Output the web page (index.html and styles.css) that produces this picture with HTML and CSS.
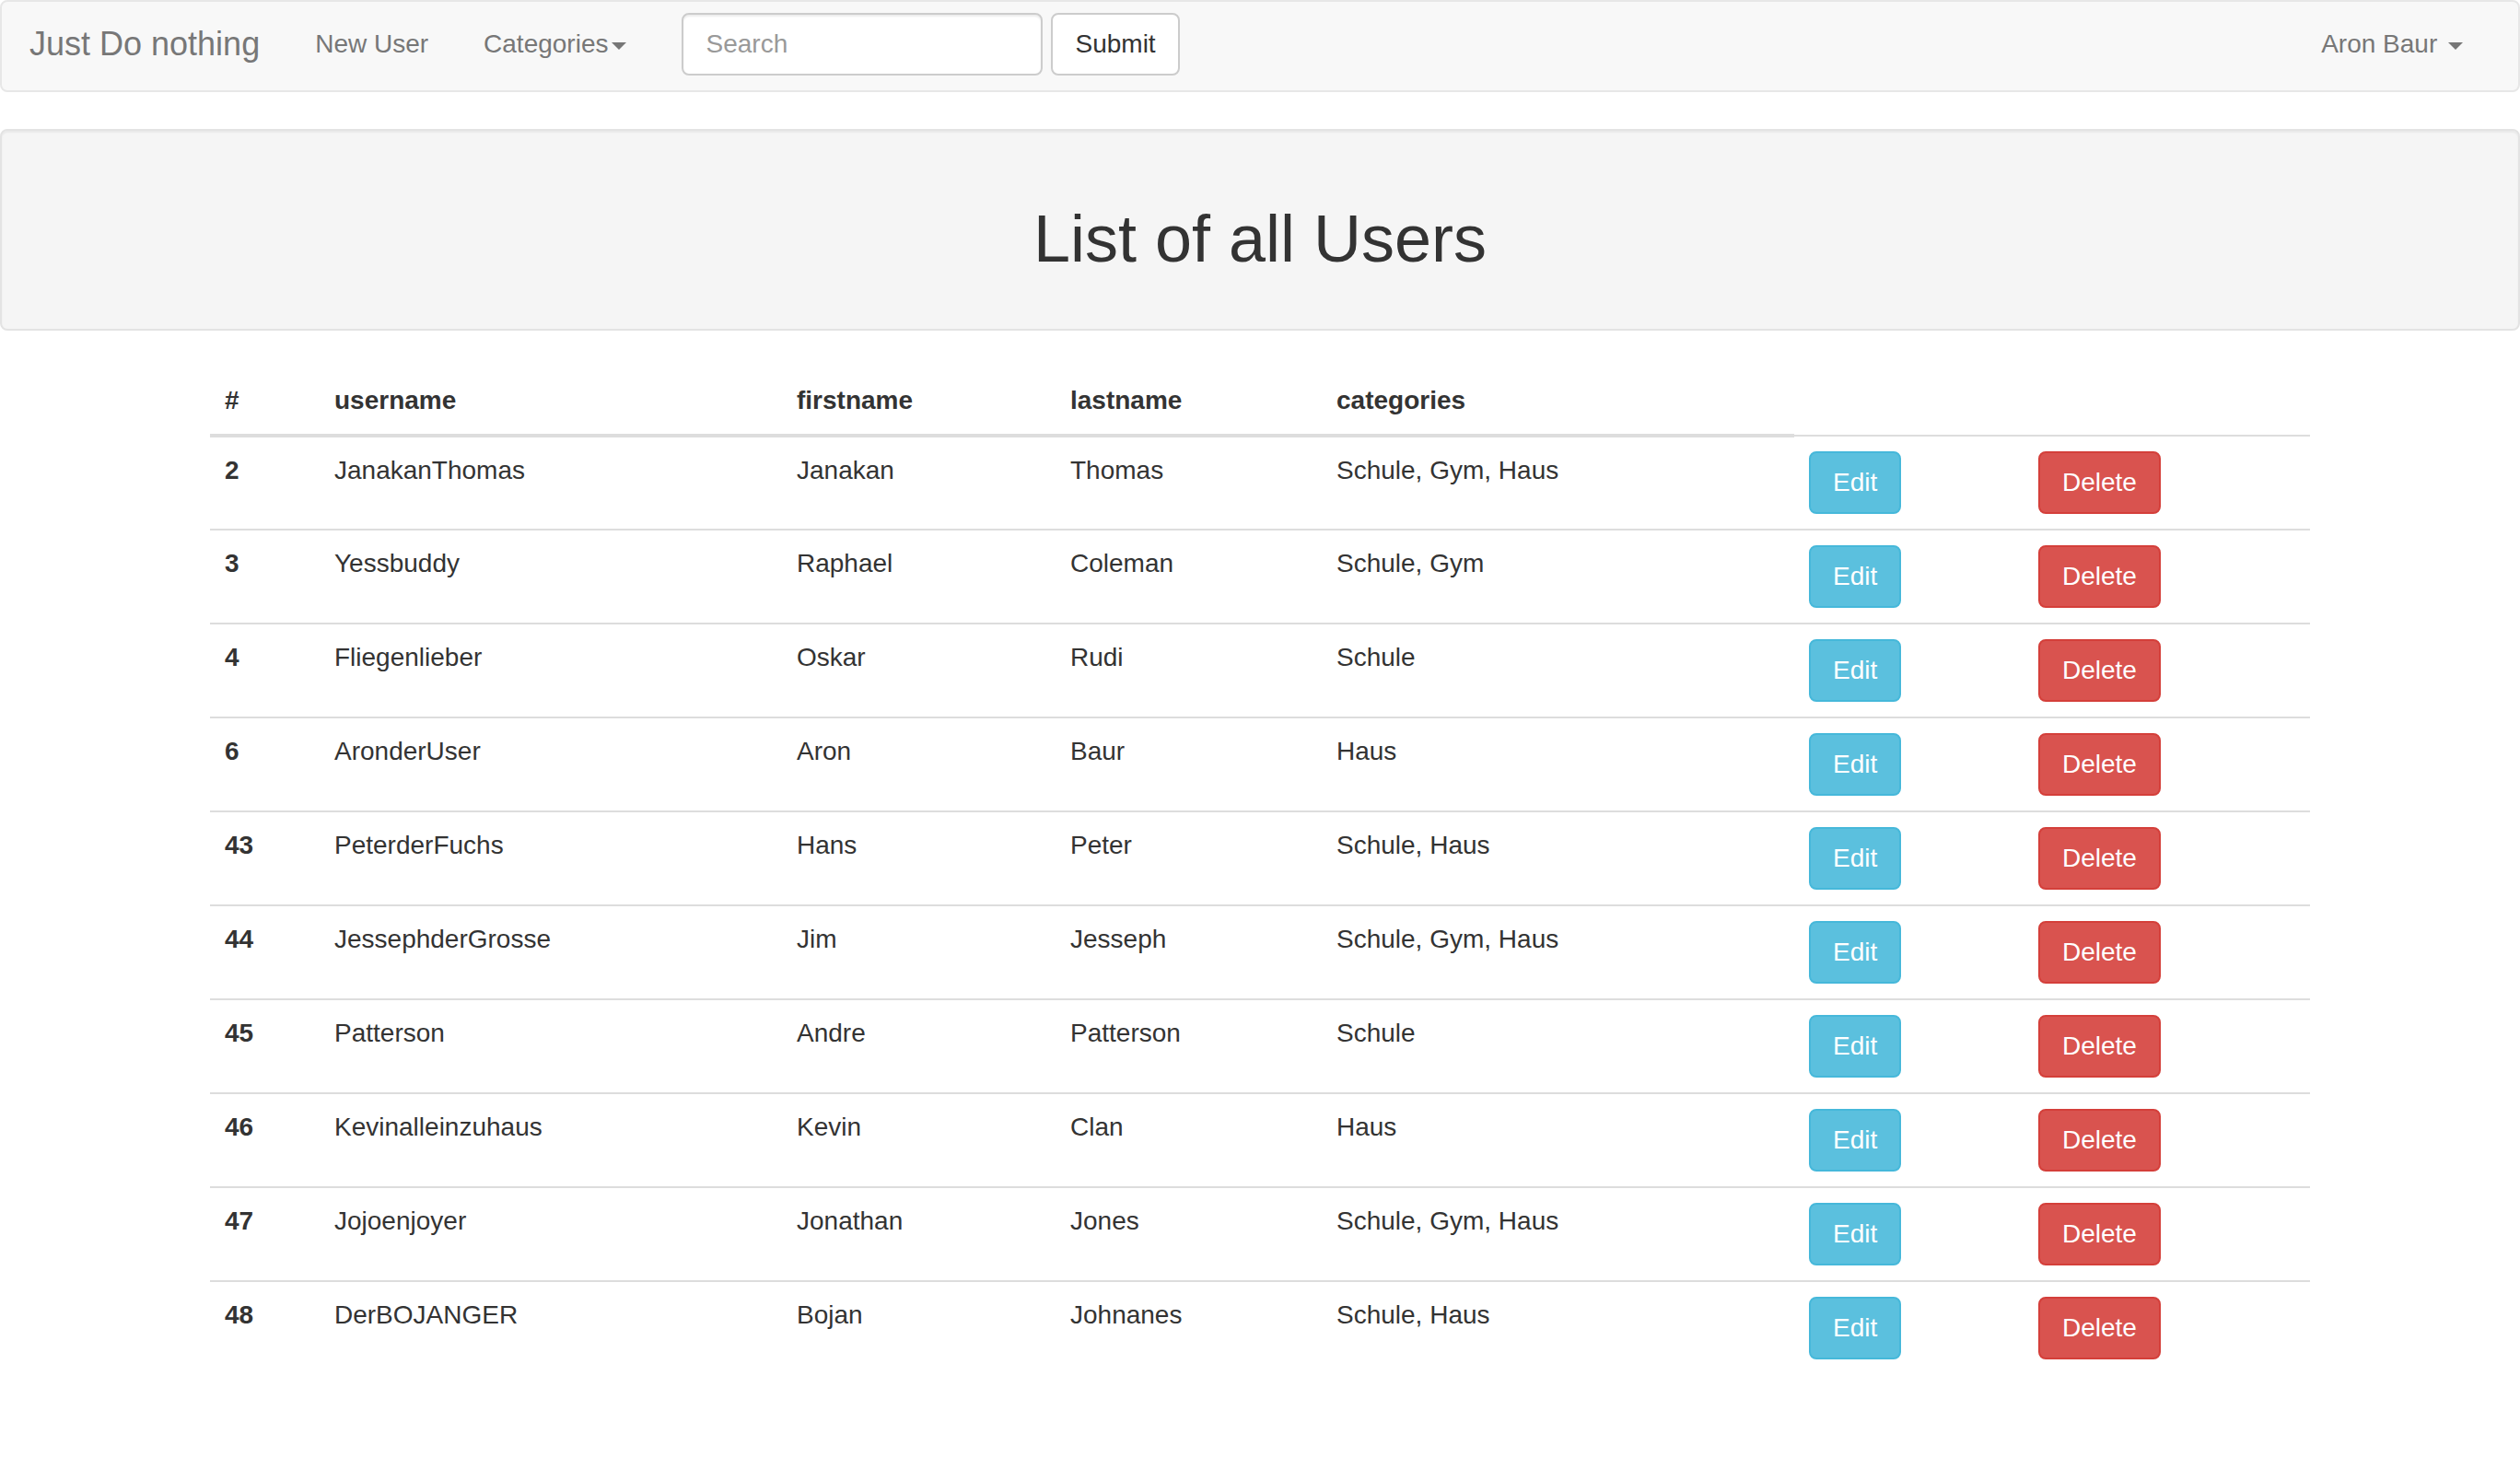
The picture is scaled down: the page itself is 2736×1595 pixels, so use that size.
FILE: index.html
```html
<!DOCTYPE html>
<html lang="en">
<head>
<meta charset="utf-8">
<title>List of all Users</title>
<link rel="stylesheet" href="styles.css">
</head>
<body>
<nav class="navbar">
  <a class="brand" href="#">Just Do nothing</a>
  <ul class="nav">
    <li><a href="#">New User</a></li>
    <li><a href="#">Categories<span class="caret"></span></a></li>
  </ul>
  <form class="navbar-form">
    <input class="form-control" type="text" placeholder="Search"><button class="btn btn-default" type="button">Submit</button>
  </form>
  <ul class="nav nav-right">
    <li><a href="#">Aron Baur <span class="caret"></span></a></li>
  </ul>
</nav>

<div class="well">
  <h1>List of all Users</h1>
</div>

<div class="container">
  <table class="table">
    <colgroup>
      <col class="c-id"><col class="c-user"><col class="c-first"><col class="c-last"><col class="c-cat"><col class="c-edit"><col class="c-del">
    </colgroup>
    <thead>
      <tr><th>#</th><th>username</th><th>firstname</th><th>lastname</th><th>categories</th></tr>
    </thead>
    <tbody>
      <tr><th>2</th><td>JanakanThomas</td><td>Janakan</td><td>Thomas</td><td>Schule, Gym, Haus</td><td><button class="btn btn-info">Edit</button></td><td><button class="btn btn-danger">Delete</button></td></tr>
      <tr><th>3</th><td>Yessbuddy</td><td>Raphael</td><td>Coleman</td><td>Schule, Gym</td><td><button class="btn btn-info">Edit</button></td><td><button class="btn btn-danger">Delete</button></td></tr>
      <tr><th>4</th><td>Fliegenlieber</td><td>Oskar</td><td>Rudi</td><td>Schule</td><td><button class="btn btn-info">Edit</button></td><td><button class="btn btn-danger">Delete</button></td></tr>
      <tr><th>6</th><td>AronderUser</td><td>Aron</td><td>Baur</td><td>Haus</td><td><button class="btn btn-info">Edit</button></td><td><button class="btn btn-danger">Delete</button></td></tr>
      <tr><th>43</th><td>PeterderFuchs</td><td>Hans</td><td>Peter</td><td>Schule, Haus</td><td><button class="btn btn-info">Edit</button></td><td><button class="btn btn-danger">Delete</button></td></tr>
      <tr><th>44</th><td>JessephderGrosse</td><td>Jim</td><td>Jesseph</td><td>Schule, Gym, Haus</td><td><button class="btn btn-info">Edit</button></td><td><button class="btn btn-danger">Delete</button></td></tr>
      <tr><th>45</th><td>Patterson</td><td>Andre</td><td>Patterson</td><td>Schule</td><td><button class="btn btn-info">Edit</button></td><td><button class="btn btn-danger">Delete</button></td></tr>
      <tr><th>46</th><td>Kevinalleinzuhaus</td><td>Kevin</td><td>Clan</td><td>Haus</td><td><button class="btn btn-info">Edit</button></td><td><button class="btn btn-danger">Delete</button></td></tr>
      <tr><th>47</th><td>Jojoenjoyer</td><td>Jonathan</td><td>Jones</td><td>Schule, Gym, Haus</td><td><button class="btn btn-info">Edit</button></td><td><button class="btn btn-danger">Delete</button></td></tr>
      <tr><th>48</th><td>DerBOJANGER</td><td>Bojan</td><td>Johnanes</td><td>Schule, Haus</td><td><button class="btn btn-info">Edit</button></td><td><button class="btn btn-danger">Delete</button></td></tr>
    </tbody>
  </table>
</div>
</body>
</html>
```

FILE: styles.css
```css
* { box-sizing: border-box; }

html, body {
  margin: 0;
  padding: 0;
  background: #fff;
}

body {
  font-family: "Liberation Sans", Arial, sans-serif;
  font-size: 28px;
  line-height: 40px;
  color: #333;
}

a { text-decoration: none; }

/* Navbar */
.navbar {
  display: flex;
  align-items: center;
  height: 100px;
  padding: 0 30px 4px;
  margin-bottom: 40px;
  background: #f8f8f8;
  border: 2px solid #e7e7e7;
  border-radius: 8px;
}

.brand {
  display: block;
  margin-left: -30px;
  padding: 28px 30px;
  font-size: 36px;
  line-height: 40px;
  color: #777;
}

.nav {
  display: flex;
  list-style: none;
  margin: 0;
  padding: 0;
}

.nav a {
  display: block;
  padding: 28px 30px;
  color: #777;
  font-size: 28px;
  line-height: 40px;
}

.nav-right { margin-left: auto; }

.caret {
  display: inline-block;
  width: 0;
  height: 0;
  margin-left: 4px;
  vertical-align: middle;
  border-top: 8px solid;
  border-left: 8px solid transparent;
  border-right: 8px solid transparent;
}

.navbar-form {
  display: flex;
  align-items: center;
  gap: 9px;
  margin: 0;
  padding: 0 0 0 30px;
}

.form-control {
  width: 392px;
  height: 68px;
  padding: 12px 24px;
  font-family: inherit;
  font-size: 28px;
  line-height: 40px;
  color: #555;
  background: #fff;
  border: 2px solid #ccc;
  border-radius: 8px;
  box-shadow: inset 0 2px 2px rgba(0,0,0,.075);
  outline: none;
}

.form-control::placeholder { color: #999; }

/* Buttons */
.btn {
  display: inline-block;
  margin: 0;
  padding: 12px 24px;
  font-family: inherit;
  font-size: 28px;
  line-height: 40px;
  border: 2px solid transparent;
  border-radius: 8px;
  cursor: pointer;
  white-space: nowrap;
}

.btn-default { color: #333; background: #fff; border-color: #ccc; }
.btn-info { color: #fff; background: #5bc0de; border-color: #46b8da; }
.btn-danger { color: #fff; background: #d9534f; border-color: #d43f3a; }

/* Well */
.well {
  margin: 0 0 40px;
  padding: 38px;
  text-align: center;
  background: #f5f5f5;
  border: 2px solid #e3e3e3;
  border-radius: 8px;
  box-shadow: inset 0 2px 2px rgba(0,0,0,.05);
}

.well h1 {
  margin: 40px 0 20px;
  font-size: 72px;
  line-height: 79px;
  font-weight: 500;
  color: #333;
}

/* Table */
.container {
  width: 2340px;
  margin: 0 auto;
  padding: 0 30px;
}

.table {
  width: 100%;
  border-collapse: collapse;
  border-spacing: 0;
  table-layout: fixed;
  margin-bottom: 40px;
}

.c-id { width: 119px; }
.c-user { width: 502px; }
.c-first { width: 297px; }
.c-last { width: 289px; }
.c-cat { width: 513px; }
.c-edit { width: 249px; }
.c-del { width: 311px; }

.table th, .table td {
  padding: 16px;
  line-height: 40px;
  text-align: left;
  vertical-align: top;
}

.table thead th {
  font-weight: bold;
  vertical-align: bottom;
  border-bottom: 4px solid #ddd;
}

.table tbody th, .table tbody td {
  border-top: 2px solid #ddd;
}

.table tbody th { font-weight: bold; }
```
